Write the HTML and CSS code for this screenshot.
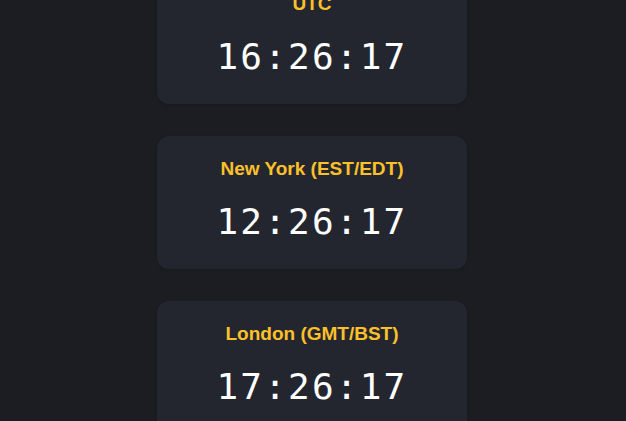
FILE: index.html
```html
<!DOCTYPE html>
<html lang="en">
<head>
<meta charset="utf-8">
<title>World Clock</title>
<link rel="stylesheet" href="styles.css">
</head>
<body>
  <main class="viewport">
    <div class="clock-list">
      <div class="clock-card">
        <div class="zone-label">UTC</div>
        <div class="zone-time">16:26:17</div>
      </div>
      <div class="clock-card">
        <div class="zone-label">New York (EST/EDT)</div>
        <div class="zone-time">12:26:17</div>
      </div>
      <div class="clock-card">
        <div class="zone-label">London (GMT/BST)</div>
        <div class="zone-time">17:26:17</div>
      </div>
    </div>
  </main>
</body>
</html>
```

FILE: styles.css
```css
html,
body {
  margin: 0;
  background: #1b1d22;
}

body {
  font-family: "Liberation Sans", Arial, sans-serif;
}

.viewport {
  box-sizing: border-box;
  height: 100vh;
  overflow: hidden;
  display: flex;
  flex-direction: column;
  align-items: center;
  justify-content: center;
  padding: 0 2px 16px 0;
}

.clock-list {
  flex: none;
  display: flex;
  flex-direction: column;
  gap: 32px;
}

.clock-card {
  box-sizing: border-box;
  width: 310px;
  height: 133px;
  padding: 22px 20px 0;
  background: #23262e;
  border-radius: 12px;
  box-shadow: 0 1px 3px rgba(0, 0, 0, 0.15);
  text-align: center;
}

.zone-label {
  color: #fcc12a;
  font-size: 19px;
  font-weight: bold;
  line-height: 22px;
}

.zone-time {
  margin-top: 21px;
  color: #ffffff;
  font-family: "DejaVu Sans Mono", monospace;
  font-size: 36px;
  line-height: 42px;
  letter-spacing: 2.2px;
}
```
